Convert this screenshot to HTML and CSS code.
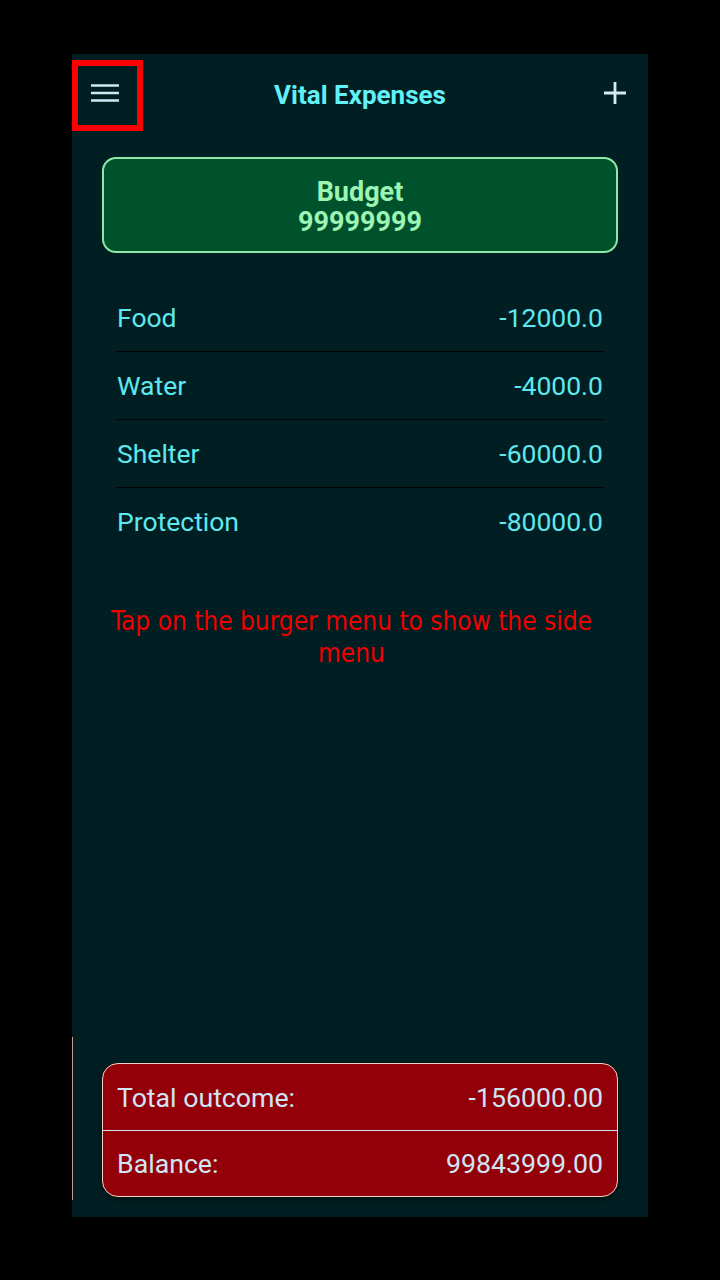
FILE: index.html
```html
<!DOCTYPE html>
<html>
<head>
<meta charset="utf-8">
<link rel="stylesheet" href="styles.css">
</head>
<body>
<div class="app">
  <header class="topbar">
    <button class="burger" aria-label="menu">
      <svg width="28" height="18" viewBox="0 0 28 18">
        <path d="M0 1.5H28M0 9H28M0 16.5H28" stroke="#cfe8f6" stroke-width="2.6" fill="none"/>
      </svg>
    </button>
    <h1 class="title">Vital Expenses</h1>
    <button class="add" aria-label="add">
      <svg width="22" height="22" viewBox="0 0 22 22">
        <path d="M11 0V22M0 11H22" stroke="#d6eaf6" stroke-width="2.8" fill="none"/>
      </svg>
    </button>
  </header>

  <section class="budget">
    <div class="budget-label">Budget</div>
    <div class="budget-value">99999999</div>
  </section>

  <ul class="expenses">
    <li class="row"><span>Food</span><span>-12000.0</span></li>
    <li class="row"><span>Water</span><span>-4000.0</span></li>
    <li class="row"><span>Shelter</span><span>-60000.0</span></li>
    <li class="row"><span>Protection</span><span>-80000.0</span></li>
  </ul>

  <p class="hint">Tap on the burger menu to show the side menu</p>

  <div class="spacer"></div>

  <section class="summary">
    <div class="sum-row"><span>Total outcome:</span><span>-156000.00</span></div>
    <div class="sum-row"><span>Balance:</span><span>99843999.00</span></div>
  </section>
</div>
</body>
</html>
```

FILE: styles.css
```css
html, body {
  margin: 0;
  padding: 0;
  background: #000;
}
body {
  width: 720px;
  height: 1280px;
  font-family: Roboto, "Liberation Sans", sans-serif;
}
.app {
  position: relative;
  margin: 54px 0 0 72px;
  width: 576px;
  height: 1163px;
  background: #011f22;
  display: flex;
  flex-direction: column;
}
.app::before {
  content: "";
  position: absolute;
  left: 0;
  top: 983px;
  width: 1px;
  height: 163px;
  background: #c89a90;
}
.topbar {
  position: relative;
  height: 80px;
  display: flex;
  align-items: flex-start;
}
.burger {
  margin-top: 6px;
  width: 71px;
  height: 71px;
  box-sizing: border-box;
  border: 6px solid #ff0000;
  background: transparent;
  padding: 0;
  display: flex;
  align-items: center;
  justify-content: center;
}
.burger svg {
  margin: -5px 5px 0 0;
}
.title {
  position: absolute;
  left: 0;
  right: 0;
  top: 23px;
  margin: 0;
  text-align: center;
  font-size: 26px;
  line-height: 36px;
  font-weight: 700;
  color: #62f1f6;
  pointer-events: none;
}
.add {
  margin-left: auto;
  margin-right: 22px;
  margin-top: 28px;
  width: 22px;
  height: 22px;
  padding: 0;
  border: 0;
  background: transparent;
  display: flex;
}
.budget {
  margin: 23px 30px 0;
  height: 96px;
  box-sizing: border-box;
  padding-top: 4px;
  border: 2px solid #8fe8a8;
  border-radius: 14px;
  background: #00522c;
  color: #9df5b4;
  font-weight: 700;
  font-size: 27px;
  line-height: 30px;
  text-align: center;
  display: flex;
  flex-direction: column;
  justify-content: center;
}
.expenses {
  list-style: none;
  margin: 31px 45px 0;
  padding: 0;
}
.row {
  height: 67px;
  display: flex;
  justify-content: space-between;
  align-items: center;
  font-size: 26.5px;
  color: #5fe8ee;
  border-bottom: 1px solid #000;
}
.row:last-child {
  border-bottom: 0;
}
.hint {
  margin: 50px 47px 0 30px;
  text-align: center;
  font-family: "DejaVu Sans Condensed", "DejaVu Sans", sans-serif;
  font-size: 26px;
  line-height: 32px;
  color: #f00000;
}
.spacer {
  flex: 1;
}
.summary {
  margin: 0 30px 20px;
  height: 134px;
  box-sizing: border-box;
  border: 1.5px solid #f2d2c8;
  border-radius: 16px;
  background: #94000a;
  box-shadow: 0 2px 6px rgba(0,0,0,0.5);
  color: #cfe6f5;
  font-size: 26.7px;
  display: flex;
  flex-direction: column;
  overflow: hidden;
}
.sum-row {
  flex: 1;
  display: flex;
  justify-content: space-between;
  align-items: center;
  padding: 2px 14px 0;
}
.sum-row + .sum-row {
  border-top: 1.5px solid #cfe6f5;
}
```
